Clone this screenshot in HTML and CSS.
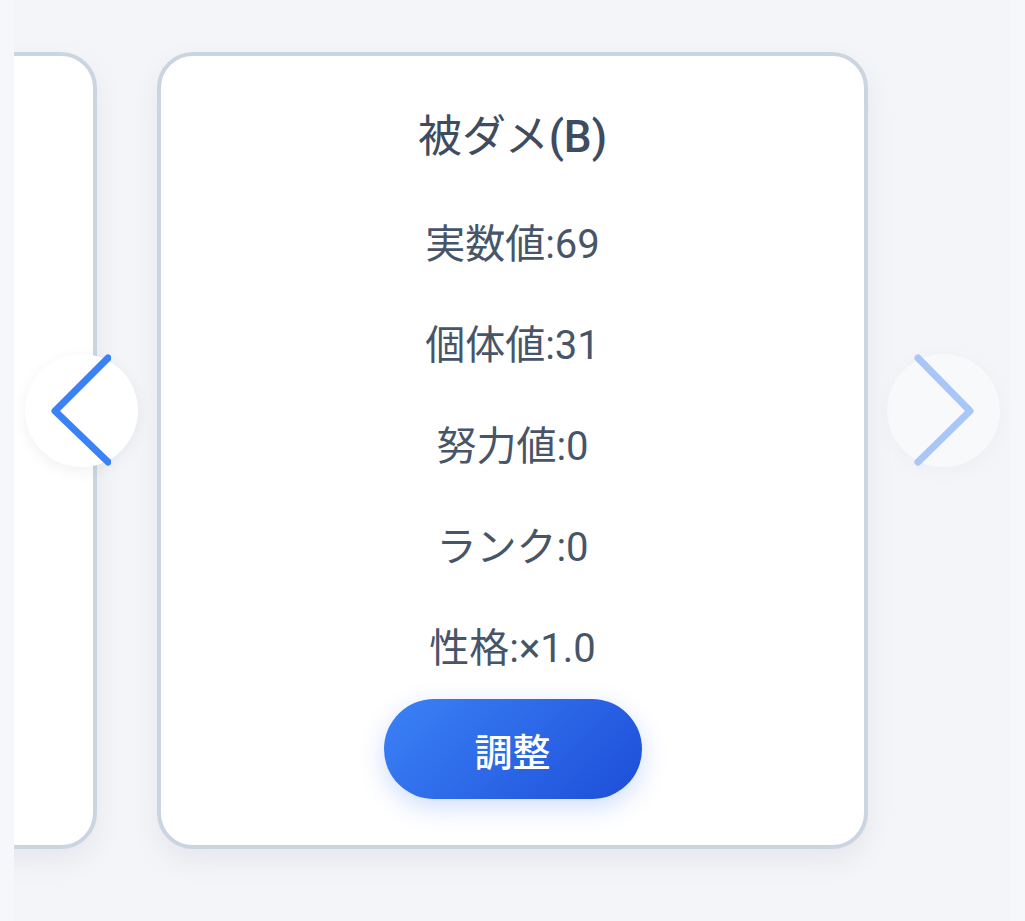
FILE: index.html
```html
<!DOCTYPE html>
<html lang="ja">
<head>
    <meta charset="UTF-8">
    <meta name="viewport" content="width=device-width, initial-scale=1.0">
    <title>ステータス調整</title>
    <link rel="stylesheet" href="styles.css">
</head>
<body>

<!-- カルーセル -->
<div class="carousel">
    <div class="track">
        <!-- 前のカード (画面外) -->
        <div class="stat-card" aria-hidden="true"></div>

        <div class="stat-card">
            <h2 class="stat-title">被ダメ<span class="stat-key">(B)</span></h2>
            <p class="stat-line">実数値:69</p>
            <p class="stat-line">個体値:31</p>
            <p class="stat-line">努力値:0</p>
            <p class="stat-line">ランク:0</p>
            <p class="stat-line">性格:×1.0</p>
            <button class="adjust-btn">調整</button>
        </div>
    </div>

    <!-- 前へ / 次へ -->
    <button class="nav-btn nav-prev" aria-label="前へ">
        <svg viewBox="0 0 60 112" width="60" height="112">
            <polyline points="57,4 4,57 57,108" fill="none" stroke="#3b82f6" stroke-width="7" stroke-linecap="round" stroke-linejoin="round"/>
        </svg>
    </button>
    <button class="nav-btn nav-next" aria-label="次へ" disabled>
        <svg viewBox="0 0 60 112" width="60" height="112">
            <polyline points="4,4 56,57 4,108" fill="none" stroke="#3b82f6" stroke-width="7" stroke-linecap="round" stroke-linejoin="round"/>
        </svg>
    </button>
</div>

</body>
</html>
```

FILE: styles.css
```css
/* ベース */
body {
    margin: 0;
    padding: 0;
    background-color: #f6f7fb;
    font-family: Roboto, "Noto Sans CJK JP", sans-serif;
    color: #475569;
}

/* カルーセル */
.carousel {
    position: relative;
    margin: 0 14px;
    height: 921px;
    overflow: hidden;
    background-color: #f3f5f9;
}

.track {
    display: flex;
    gap: 60px;
    padding-top: 52px;
    transform: translateX(-628px);
}

/* ステータスカード */
.stat-card {
    flex: 0 0 auto;
    box-sizing: border-box;
    width: 711px;
    height: 797px;
    padding: 48px 0 0;
    background-color: #ffffff;
    border: 4px solid #cbd5e1;
    border-radius: 36px;
    box-shadow: 0 12px 30px rgba(15, 23, 42, 0.06);
    display: flex;
    flex-direction: column;
    align-items: center;
}

.stat-title {
    margin: 0 0 45px;
    font-size: 44px;
    font-weight: 400;
    line-height: 66px;
    color: #3f4b5f;
}

.stat-key {
    font-weight: 500;
}

.stat-line {
    margin: 0 0 41px;
    font-size: 40px;
    line-height: 60px;
    color: #475569;
}

.stat-line:last-of-type {
    margin-bottom: 20px;
}

/* 調整ボタン */
.adjust-btn {
    width: 258px;
    height: 100px;
    border: none;
    border-radius: 50px;
    background: linear-gradient(135deg, #3b82f6, #1d4ed8);
    color: #ffffff;
    font-family: inherit;
    font-size: 38px;
    font-weight: 500;
    box-shadow: 0 8px 26px rgba(37, 99, 235, 0.22);
    cursor: pointer;
}

/* ナビボタン */
.nav-btn {
    position: absolute;
    top: 354px;
    width: 113px;
    height: 113px;
    padding: 0;
    border: none;
    border-radius: 50%;
    background-color: #ffffff;
    box-shadow: 0 4px 16px rgba(15, 23, 42, 0.06);
    cursor: pointer;
}

.nav-btn svg {
    position: absolute;
    top: 0;
}

.nav-prev {
    left: 11px;
}

.nav-prev svg {
    left: 26px;
}

.nav-next {
    left: 873px;
}

.nav-next svg {
    left: 27px;
}

.nav-next:disabled {
    opacity: 0.4;
    cursor: default;
}
```
